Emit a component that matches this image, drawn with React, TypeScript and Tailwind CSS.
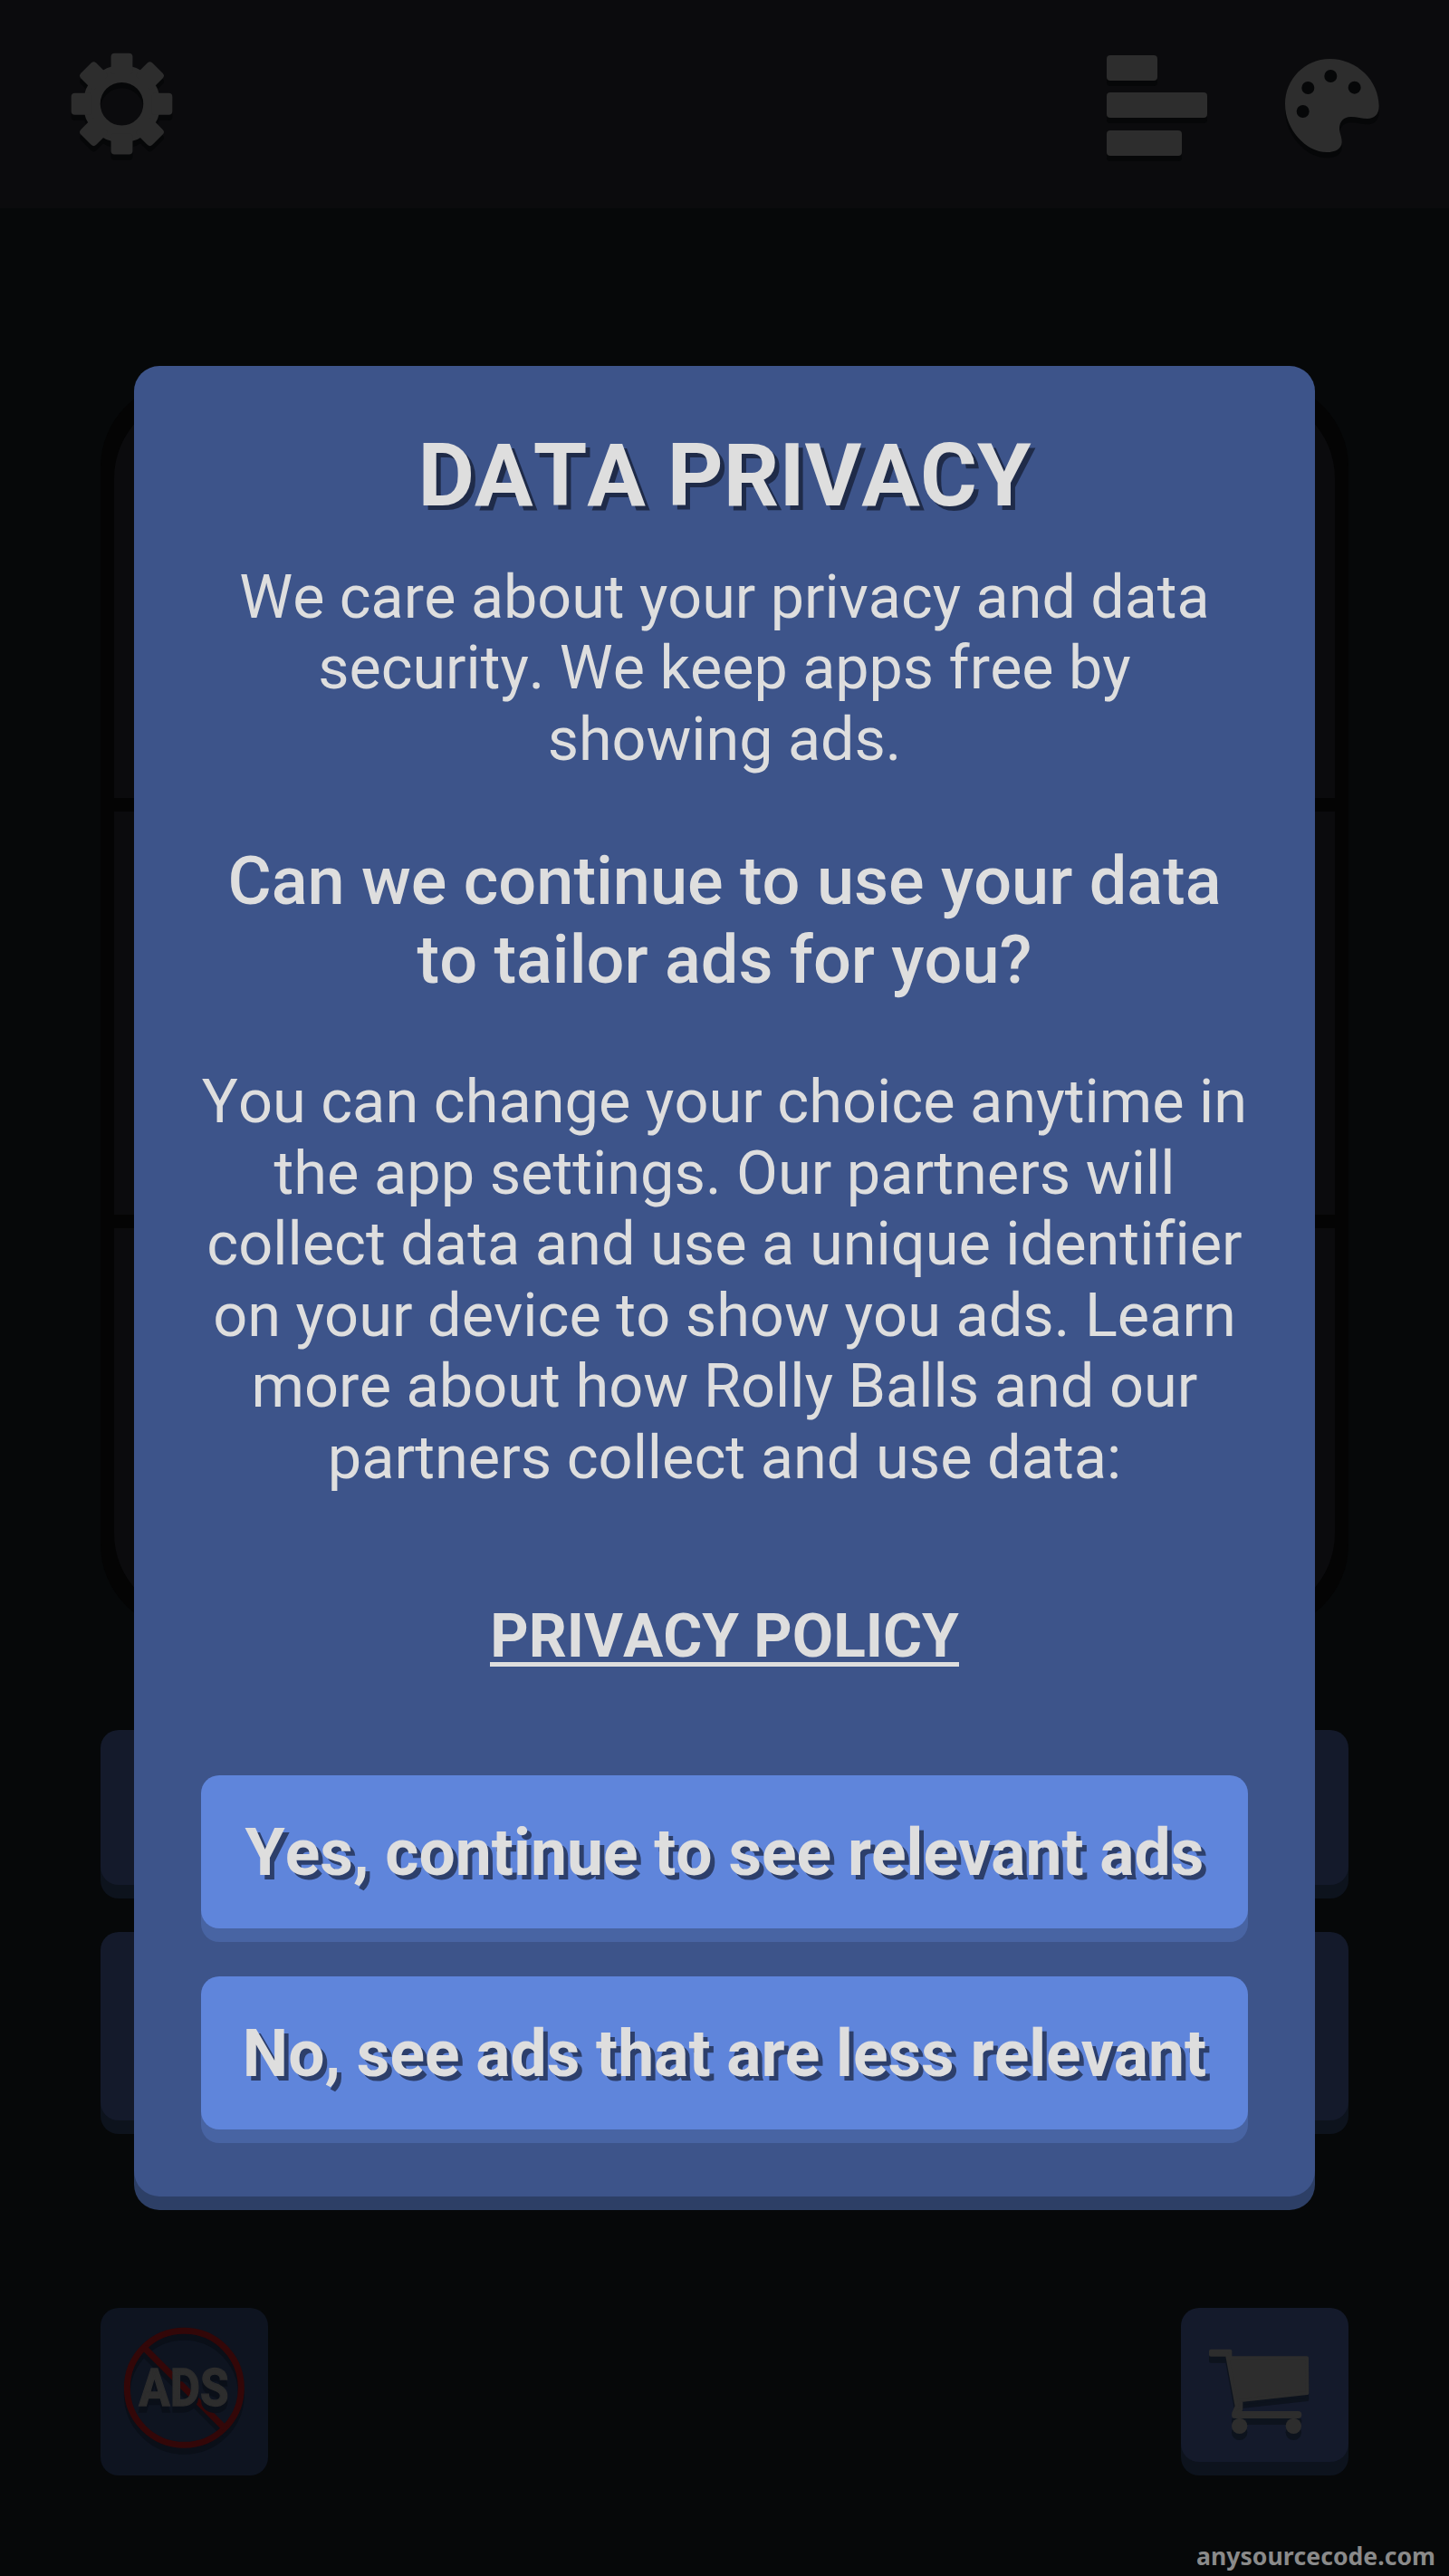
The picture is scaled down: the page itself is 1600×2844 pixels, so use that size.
import type { ReactNode } from 'react'

const gearTeeth = [0, 45, 90, 135, 180, 225, 270, 315]

function GearShape({ color }: { color: string }) {
  return (
    <g fill={color}>
      <circle cx="170" cy="170" r="100" fill="none" stroke={color} strokeWidth="57" />
      {gearTeeth.map((angle) => (
        <rect
          key={angle}
          x="134"
          y="2"
          width="72"
          height="70"
          rx="12"
          transform={`rotate(${angle} 170 170)`}
        />
      ))}
    </g>
  )
}

function GearIcon() {
  return (
    <svg viewBox="0 0 340 360" className="h-[120px] w-[113px]" aria-hidden="true">
      <g transform="translate(0 19)">
        <GearShape color="#060708" />
      </g>
      <GearShape color="#2d2d2d" />
    </svg>
  )
}

function LeaderboardIcon() {
  return (
    <div className="flex flex-col gap-[13.4px]" aria-hidden="true">
      <div className="h-7 w-14 rounded-[4px] bg-[#2d2d2d] shadow-[0_6px_0_#060708]" />
      <div className="h-7 w-[111px] rounded-[4px] bg-[#2d2d2d] shadow-[0_6px_0_#060708]" />
      <div className="h-7 w-[83px] rounded-[4px] bg-[#2d2d2d] shadow-[0_6px_0_#060708]" />
    </div>
  )
}

const palettePath =
  'M717 255C717 172 783 105 865 105C955 105 1028 177 1028 262C1028 290 1012 303 990 303C972 303 955 297 935 297C911 297 897 313 897 335C897 351 905 362 905 380C905 402 884 414 855 414C787 414 717 340 717 255Z'

function PaletteIcon() {
  return (
    <svg viewBox="717 105 312 330" className="h-[110px] w-[104px]" aria-hidden="true">
      <path d={palettePath} fill="#060708" transform="translate(0 19)" />
      <path d={palettePath} fill="#2d2d2d" />
      <g fill="#060708">
        <circle cx="868" cy="162" r="21" />
        <circle cx="793" cy="201" r="21" />
        <circle cx="947" cy="200" r="21" />
        <circle cx="776" cy="279" r="21" />
      </g>
    </svg>
  )
}

function CartShape({ color }: { color: string }) {
  return (
    <g fill={color} stroke={color} strokeLinejoin="round" strokeLinecap="round">
      <path
        d="M200 227H264V250H518L519 366L300 390V420L276 443V432L286 410L254 239H200Z"
        strokeWidth="12"
      />
      <path d="M282 438H489" strokeWidth="24" fill="none" />
      <circle cx="295" cy="475" r="26" stroke="none" />
      <circle cx="474" cy="475" r="26" stroke="none" />
    </g>
  )
}

function CartIcon() {
  return (
    <svg viewBox="101 84 555 555" className="size-[185px]" aria-hidden="true">
      <g transform="translate(0 21)">
        <CartShape color="#0d131d" />
      </g>
      <CartShape color="#2d2d2d" />
    </svg>
  )
}

function NoAdsIcon() {
  return (
    <svg viewBox="63 84 555 555" className="size-[185px]">
      <g fill="none" stroke="#0a0f18" strokeWidth="21" transform="translate(0 21)">
        <circle cx="340" cy="349" r="189" />
        <path d="M207 215L474 482" />
      </g>
      <g fill="none" stroke="#330708" strokeWidth="21">
        <circle cx="340" cy="349" r="189" />
        <path d="M207 215L474 482" />
      </g>
      <g className="[filter:drop-shadow(0_21px_0_#0a0f18)]">
        <text
          x="190"
          y="408"
          textLength="298"
          lengthAdjust="spacingAndGlyphs"
          fill="#2d2d2d"
          stroke="#2d2d2d"
          strokeWidth="4"
          className="text-[174px] font-bold"
        >
          ADS
        </text>
      </g>
    </svg>
  )
}

function ConsentButton({ children }: { children: ReactNode }) {
  return (
    <button
      type="button"
      className="flex h-[169px] w-full items-center justify-center rounded-[20px] bg-[#5f85db] pt-[2px] text-[71.4px] leading-none font-bold whitespace-nowrap text-[#dedede] shadow-[0_15px_0_#4864a3] [text-shadow:5px_5px_0_#2d3f6b]"
    >
      {children}
    </button>
  )
}

function GameScreen() {
  return (
    <div className="flex h-full flex-col bg-[#060809]">
      <header className="flex h-[230px] items-start justify-between bg-[#0b0b0d] pr-[77px] pl-[78px]">
        <div className="pt-[58px]">
          <GearIcon />
        </div>
        <div className="flex gap-[86px]">
          <div className="pt-[61px]">
            <LeaderboardIcon />
          </div>
          <div className="pt-[65px]">
            <PaletteIcon />
          </div>
        </div>
      </header>

      <main className="flex flex-col px-[111px] pt-[191px]">
        <div className="flex h-[1379px] flex-col gap-[15px] overflow-hidden rounded-[95px] bg-[#040404] p-[15px]">
          <div className="h-[445px] rounded-t-[92px] bg-[#0b0b0d]" />
          <div className="h-[445px] bg-[#0b0b0d]" />
          <div className="flex-1 rounded-b-[92px] bg-[#0b0b0d]" />
        </div>
        <div className="mt-[110px] h-[171px] rounded-[20px] bg-[#141a2b] shadow-[0_15px_0_#0d131d]" />
        <div className="mt-[52px] h-[208px] rounded-[20px] bg-[#141a2b] shadow-[0_15px_0_#0d131d]" />
        <div className="mt-[207px] flex justify-between">
          <div className="size-[185px] rounded-[20px] bg-[#0e1420]">
            <NoAdsIcon />
          </div>
          <div className="h-[170px] w-[185px] rounded-[20px] bg-[#141a2b] shadow-[0_15px_0_#0d131d]">
            <CartIcon />
          </div>
        </div>
      </main>

      <footer className="mt-auto flex justify-end pr-[15px] pb-1 font-['Noto_Sans',sans-serif] text-[26.6px] leading-[36px] font-bold text-[#8a8a8a]">
        anysourcecode.com
      </footer>
    </div>
  )
}

function PrivacyDialog() {
  return (
    <section
      role="dialog"
      aria-label="Data privacy"
      className="flex h-[2021px] w-[1304px] flex-col items-center rounded-[28px] bg-[#3d548a] px-[74px] text-center text-[66.4px] leading-[78.5px] text-[#dedede] shadow-[0_15px_0_#2d3f66]"
    >
      <h1 className="mt-[65px] text-[96.2px] leading-[113px] font-bold [text-shadow:5px_5px_0_#1f2b49]">
        DATA PRIVACY
      </h1>
      <p className="mt-[37.5px] whitespace-nowrap">
        We care about your privacy and data
        <br />
        security. We keep apps free by
        <br />
        showing ads.
      </p>
      <p className="mt-[73.5px] text-[73.9px] leading-[87.6px] font-medium whitespace-nowrap">
        Can we continue to use your data
        <br />
        to tailor ads for you?
      </p>
      <p className="mt-[73.5px] text-[66.7px] whitespace-nowrap">
        You can change your choice anytime in
        <br />
        the app settings. Our partners will
        <br />
        collect data and use a unique identifier
        <br />
        on your device to show you ads. Learn
        <br />
        more about how Rolly Balls and our
        <br />
        partners collect and use data:
      </p>
      <a
        href="#privacy"
        className="mt-auto mb-[120px] h-[72px] border-b-[5px] border-[#dedede] text-[65.8px] font-bold whitespace-nowrap"
      >
        PRIVACY POLICY
      </a>
      <div className="mb-[74px] flex w-full flex-col gap-[53px]">
        <ConsentButton>Yes, continue to see relevant ads</ConsentButton>
        <ConsentButton>No, see ads that are less relevant</ConsentButton>
      </div>
    </section>
  )
}

export default function App() {
  return (
    <div className="relative h-[2844px] w-[1600px] overflow-hidden font-[Roboto,sans-serif] [font-kerning:none] [font-variant-ligatures:none]">
      <GameScreen />
      <div className="absolute inset-0 flex items-start justify-center pt-[404px]">
        <PrivacyDialog />
      </div>
    </div>
  )
}
